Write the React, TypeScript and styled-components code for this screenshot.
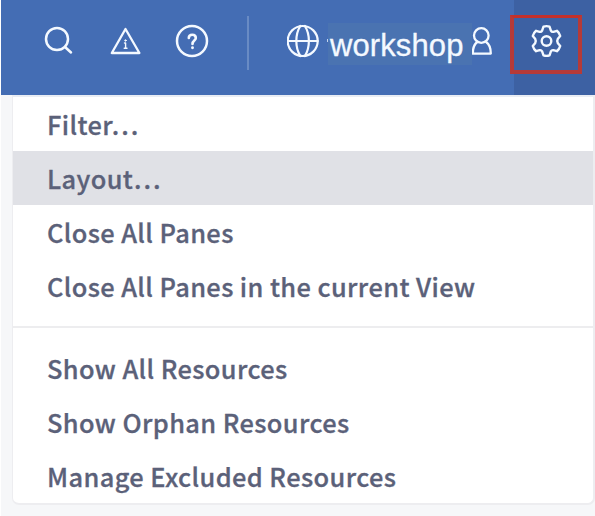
import React from 'react';
import styled, { createGlobalStyle } from 'styled-components';

const GlobalStyle = createGlobalStyle`
  * { box-sizing: border-box; }
  body { margin: 0; background: #fff; overflow: hidden; }
`;

const Page = styled.div`
  width: 595px;
  height: 516px;
  padding-left: 1px;
  background: #f6f7f9;
  background-clip: content-box;
  font-family: 'Noto Sans CJK SC', 'Noto Sans', sans-serif;
`;

const TopBar = styled.header`
  display: flex;
  height: 95px;
  padding-left: 41px;
  background: #446db4;
  color: #f4f9ff;
`;

const IconSlot = styled.span<{ $width: number }>`
  width: ${(p) => p.$width}px;
  height: 82px;
  flex: none;
  display: flex;
  align-items: center;

  svg { display: block; }
`;

const Divider = styled.span`
  width: 2px;
  height: 54px;
  margin: 16px 38px 0 0;
  flex: none;
  background: #698bc4;
`;

const Account = styled.span`
  width: 144px;
  height: 42px;
  margin-top: 23px;
  padding-left: 2px;
  flex: none;
  background: #4a73b1;
  font: 31px/46px 'Liberation Sans', Arial, sans-serif;
  letter-spacing: 0.1px;
  white-space: nowrap;
  -webkit-text-stroke: 0.3px currentColor;
`;

const Tick = styled.span`
  width: 1px;
  height: 3px;
  margin: 39px 0 0 -1px;
  flex: none;
  background: #c3d3ec;
`;

const SettingsTab = styled.div`
  width: 81px;
  height: 95px;
  margin-left: auto;
  flex: none;
  background: #3d61a3;
`;

const Highlight = styled.div`
  width: 72px;
  height: 59px;
  margin: 15px 0 0 -4px;
  display: flex;
  align-items: flex-start;
  justify-content: center;
  padding-top: 6px;
  border: solid #b63a38;
  border-top-color: #c4302a;
  border-width: 3px 4px 4px;
`;

const Menu = styled.nav`
  width: 583px;
  height: 410px;
  margin-left: 11px;
  border: solid #ededf0;
  border-top-color: #e9edf4;
  border-width: 2px 2px 2px 1px;
  border-radius: 0 0 7px 7px;
  background: #fff;
`;

const MenuItem = styled.div<{ $active?: boolean }>`
  height: 54px;
  padding-left: 34px;
  background: ${(p) => (p.$active ? '#e0e1e6' : 'transparent')};
  color: #5b6179;
  font-size: 25.4px;
  font-weight: 500;
  line-height: 55px;
  letter-spacing: 0.4px;
  white-space: nowrap;
  -webkit-text-stroke: 0.3px #5b6179;
`;

const Separator = styled.div`
  height: 2px;
  margin: 13px 0;
  background: #ededef;
`;

const stroke = { fill: 'none', stroke: 'currentColor', strokeWidth: 2.5, strokeLinecap: 'round', strokeLinejoin: 'round' } as const;

const SearchIcon = () => (
  <svg width="34" height="34" viewBox="42 24 34 34" {...stroke}>
    <circle cx="57" cy="39" r="11" />
    <path d="M65 47l6 5.5" />
  </svg>
);

const WarningIcon = () => (
  <svg width="34" height="34" viewBox="109 24 34 34" {...stroke}>
    <path d="M125.5 29l-13.7 24h27.6z" strokeWidth="2.3" />
    <path d="M124.5 43h1.1v5.2M124.2 48.2h2.8" strokeWidth="1.4" />
    <circle cx="125.5" cy="40.5" r=".8" strokeWidth=".8" fill="currentColor" />
  </svg>
);

const HelpIcon = () => (
  <svg width="34" height="34" viewBox="175 24 34 34" {...stroke}>
    <circle cx="192" cy="41" r="15" />
    <path d="M188.8 38c0-4.3 7-4.3 7 0 0 2.7-3.3 2.5-3.3 6" strokeWidth="2.6" />
    <circle cx="192.5" cy="47.8" r=".7" strokeWidth="1.5" fill="currentColor" />
  </svg>
);

const GlobeIcon = () => (
  <svg width="34" height="34" viewBox="287 24 34 34" {...stroke} strokeWidth="2.2">
    <circle cx="302.7" cy="41" r="15" />
    <path d="M287.7 41h30M300.3 26c-5.3 8.5-5.3 21.5 0 30M304.9 26c5.3 8.5 5.3 21.5 0 30" />
  </svg>
);

const UserIcon = () => (
  <svg width="24" height="34" viewBox="472 24 24 34" {...stroke} strokeWidth="2.3">
    <circle cx="481.3" cy="35.5" r="7.3" />
    <path d="M477.3 42c-3.2 2.3-4.5 6-4.5 11.6h18c0-5.6-1.3-9.3-4.7-11.6" />
  </svg>
);

const GearIcon = () => (
  <svg width="34" height="34" viewBox="529.5 24 34 34" {...stroke} strokeWidth="2.4">
    <path d="M544 26.6q3-.9 6 0l1.4 4q.8 1.5 2.5 1.2l3.5-1q2.4 1.9 3.3 5.2l-2.3 2.7q-1.3 2.3 0 4.6l2.3 2.7q-.9 3.3-3.3 5.2l-3.5-1q-1.7-.3-2.5 1.2l-1.4 4q-3 .9-6 0l-1.4-4q-.8-1.5-2.5-1.2l-3.5 1q-2.4-1.9-3.3-5.2l2.3-2.7q1.3-2.3 0-4.6l-2.3-2.7q.9-3.3 3.3-5.2l3.5 1q1.7.3 2.5-1.2z" />
    <circle cx="547" cy="41" r="4.8" />
  </svg>
);

export default function App() {
  return (
    <>
      <GlobalStyle />
      <Page>
        <TopBar>
          <IconSlot $width={67}><SearchIcon /></IconSlot>
          <IconSlot $width={66}><WarningIcon /></IconSlot>
          <IconSlot $width={72}><HelpIcon /></IconSlot>
          <Divider />
          <IconSlot $width={41}><GlobeIcon /></IconSlot>
          <Tick />
          <Account>workshop</Account>
          <IconSlot $width={24}><UserIcon /></IconSlot>
          <SettingsTab>
            <Highlight><GearIcon /></Highlight>
          </SettingsTab>
        </TopBar>
        <Menu>
          <MenuItem>Filter…</MenuItem>
          <MenuItem $active>Layout…</MenuItem>
          <MenuItem>Close All Panes</MenuItem>
          <MenuItem>Close All Panes in the current View</MenuItem>
          <Separator />
          <MenuItem>Show All Resources</MenuItem>
          <MenuItem>Show Orphan Resources</MenuItem>
          <MenuItem>Manage Excluded Resources</MenuItem>
        </Menu>
      </Page>
    </>
  );
}
